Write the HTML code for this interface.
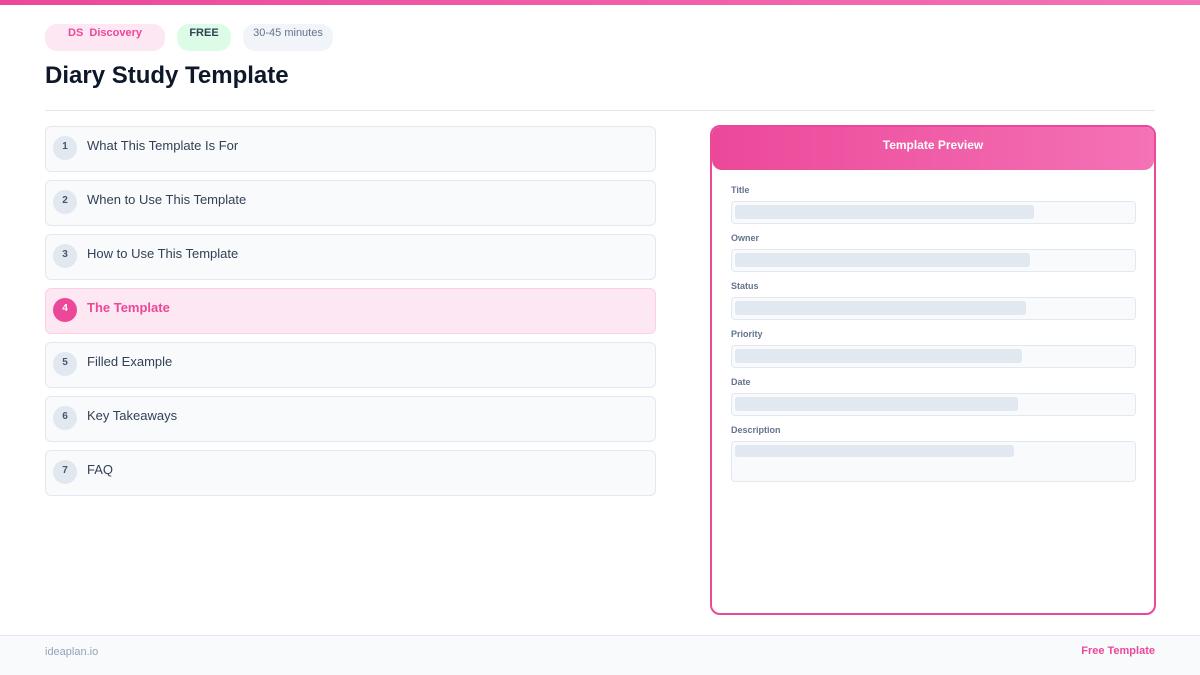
<!DOCTYPE html>
<html><head><style>
*{margin:0;padding:0;box-sizing:border-box}
body{width:1200px;height:675px;background:#fff;font-family:"Liberation Sans",sans-serif;position:relative;overflow:hidden}
.top{position:absolute;left:0;top:0;width:1200px;height:5px;background:linear-gradient(90deg,#ec4899,#f472b6)}
.b{position:absolute;top:24px;height:27px;border-radius:12px;font-size:11px;text-align:center;padding-top:3px}
h1{position:absolute;left:45px;top:62px;font-size:24px;font-weight:bold;color:#0f172a}
.hr{position:absolute;left:45px;top:110px;width:1110px;height:1px;background:#e2e8f0}
.it{position:absolute;left:45px;width:611px;height:46px;border:1px solid #e2e8f0;border-radius:6px;background:#f8fafc}
.it .n{position:absolute;left:7px;top:9px;width:24px;height:24px;border-radius:50%;background:#e2e8f0;color:#475569;font-size:10px;font-weight:bold;text-align:center;line-height:21px}
.it .t{position:absolute;left:41px;top:11px;font-size:13px;color:#334155}
.it.a{background:#fce7f3;border-color:#fbcfe8}
.it.a .n{background:#ec4899;color:#fff}
.it.a .t{color:#ec4899;font-weight:bold}
.pv{position:absolute;left:710px;top:125px;width:446px;height:490px;border:2px solid #ec4899;border-radius:10px;overflow:hidden}
.ph{height:43px;background:linear-gradient(90deg,#ec4899,#f472b6);color:#fff;font-weight:bold;font-size:12px;text-align:center;line-height:36px;border-radius:0 0 10px 10px}
.l{position:absolute;left:19px;font-size:9px;font-weight:bold;color:#64748b}
.f{position:absolute;left:19px;width:405px;height:23px;border:1px solid #e2e8f0;border-radius:4px;background:#f8fafc}
.f i{position:absolute;left:3px;top:3px;height:14px;background:#e2e8f0;border-radius:3px}
.ft{position:absolute;left:0;top:635px;width:1200px;height:40px;background:#f8fafc;border-top:1px solid #e2e8f0;font-size:11px}
</style></head><body>
<div class="top"></div>
<div class="b" style="left:45px;width:120px;background:#fce7f3;color:#ec4899;font-weight:bold">DS&nbsp; Discovery</div>
<div class="b" style="left:177px;width:54px;background:#dcfce7;color:#334155;font-weight:bold">FREE</div>
<div class="b" style="left:243px;width:90px;background:#f1f5f9;color:#64748b">30-45 minutes</div>
<h1>Diary Study Template</h1>
<div class="hr"></div>
<div class="it" style="top:126px"><div class="n">1</div><div class="t">What This Template Is For</div></div>
<div class="it" style="top:180px"><div class="n">2</div><div class="t">When to Use This Template</div></div>
<div class="it" style="top:234px"><div class="n">3</div><div class="t">How to Use This Template</div></div>
<div class="it a" style="top:288px"><div class="n">4</div><div class="t">The Template</div></div>
<div class="it" style="top:342px"><div class="n">5</div><div class="t">Filled Example</div></div>
<div class="it" style="top:396px"><div class="n">6</div><div class="t">Key Takeaways</div></div>
<div class="it" style="top:450px"><div class="n">7</div><div class="t">FAQ</div></div>
<div class="pv"><div class="ph">Template Preview</div>
<div class="l" style="top:58px">Title</div><div class="f" style="top:74px"><i style="width:299px"></i></div>
<div class="l" style="top:106px">Owner</div><div class="f" style="top:122px"><i style="width:295px"></i></div>
<div class="l" style="top:154px">Status</div><div class="f" style="top:170px"><i style="width:291px"></i></div>
<div class="l" style="top:202px">Priority</div><div class="f" style="top:218px"><i style="width:287px"></i></div>
<div class="l" style="top:250px">Date</div><div class="f" style="top:266px"><i style="width:283px"></i></div>
<div class="l" style="top:298px">Description</div><div class="f" style="top:314px;height:41px"><i style="width:279px;height:12px"></i></div>
</div>
<div class="ft"><span style="position:absolute;left:45px;top:10px;color:#94a3b8">ideaplan.io</span><span style="position:absolute;right:45px;top:9px;color:#ec4899;font-weight:bold">Free Template</span></div>
</body></html>
